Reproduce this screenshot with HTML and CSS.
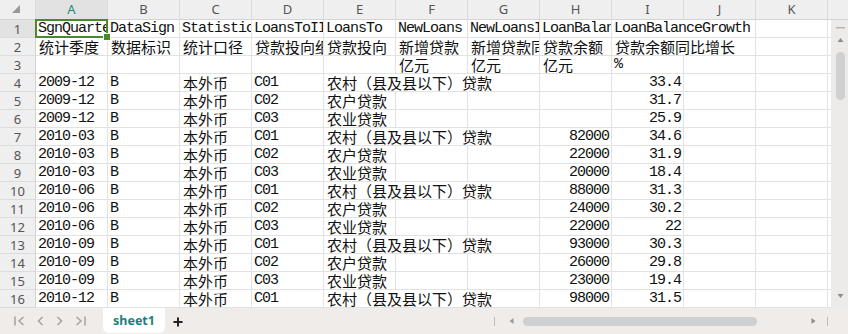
FILE: index.html
```html
<!DOCTYPE html>
<html lang="zh">
<head>
<meta charset="utf-8">
<link rel="stylesheet" href="styles.css">
</head>
<body>
<div class="app">
  <div class="top">
  <div class="sheet">
    <div class="hd corner"><svg width="8" height="8" viewBox="0 0 8 8"><path d="M8 0 L8 8 L0 8 Z" fill="#9a9a9a"/></svg></div>
    <div class="hd col sel">A</div>
    <div class="hd col">B</div>
    <div class="hd col">C</div>
    <div class="hd col">D</div>
    <div class="hd col">E</div>
    <div class="hd col">F</div>
    <div class="hd col">G</div>
    <div class="hd col">H</div>
    <div class="hd col">I</div>
    <div class="hd col">J</div>
    <div class="hd col">K</div>
    <div class="hd fill"></div>

    <div class="rh sel">1</div>
    <div class="c active"><span class="clip">SgnQuarter</span></div>
    <div class="c">DataSign</div>
    <div class="c">StatisticCaliber</div>
    <div class="c">LoansToIIType</div>
    <div class="c">LoansTo</div>
    <div class="c">NewLoans</div>
    <div class="c">NewLoansIncrease</div>
    <div class="c">LoanBalance</div>
    <div class="c s2">LoanBalanceGrowth</div>
    <div class="c"></div>
    <div class="c gap"></div>

    <div class="rh">2</div>
    <div class="c z">统计季度</div>
    <div class="c z">数据标识</div>
    <div class="c z">统计口径</div>
    <div class="c z">贷款投向细分</div>
    <div class="c z">贷款投向</div>
    <div class="c z">新增贷款</div>
    <div class="c z">新增贷款同比</div>
    <div class="c z">贷款余额</div>
    <div class="c z s2">贷款余额同比增长</div>
    <div class="c"></div>
    <div class="c gap"></div>

    <div class="rh">3</div>
    <div class="c"></div>
    <div class="c"></div>
    <div class="c"></div>
    <div class="c"></div>
    <div class="c"></div>
    <div class="c z">亿元</div>
    <div class="c z">亿元</div>
    <div class="c z">亿元</div>
    <div class="c">%</div>
    <div class="c"></div>
    <div class="c"></div>
    <div class="c gap"></div>

    <div class="rh">4</div>
    <div class="c">2009-12</div><div class="c">B</div><div class="c z">本外币</div><div class="c">C01</div>
    <div class="c z s3">农村（县及县以下）贷款</div>
    <div class="c r"></div><div class="c r">33.4</div><div class="c"></div><div class="c"></div><div class="c gap"></div>

    <div class="rh">5</div>
    <div class="c">2009-12</div><div class="c">B</div><div class="c z">本外币</div><div class="c">C02</div>
    <div class="c z">农户贷款</div><div class="c"></div><div class="c"></div>
    <div class="c r"></div><div class="c r">31.7</div><div class="c"></div><div class="c"></div><div class="c gap"></div>

    <div class="rh">6</div>
    <div class="c">2009-12</div><div class="c">B</div><div class="c z">本外币</div><div class="c">C03</div>
    <div class="c z">农业贷款</div><div class="c"></div><div class="c"></div>
    <div class="c r"></div><div class="c r">25.9</div><div class="c"></div><div class="c"></div><div class="c gap"></div>

    <div class="rh">7</div>
    <div class="c">2010-03</div><div class="c">B</div><div class="c z">本外币</div><div class="c">C01</div>
    <div class="c z s3">农村（县及县以下）贷款</div>
    <div class="c r">82000</div><div class="c r">34.6</div><div class="c"></div><div class="c"></div><div class="c gap"></div>

    <div class="rh">8</div>
    <div class="c">2010-03</div><div class="c">B</div><div class="c z">本外币</div><div class="c">C02</div>
    <div class="c z">农户贷款</div><div class="c"></div><div class="c"></div>
    <div class="c r">22000</div><div class="c r">31.9</div><div class="c"></div><div class="c"></div><div class="c gap"></div>

    <div class="rh">9</div>
    <div class="c">2010-03</div><div class="c">B</div><div class="c z">本外币</div><div class="c">C03</div>
    <div class="c z">农业贷款</div><div class="c"></div><div class="c"></div>
    <div class="c r">20000</div><div class="c r">18.4</div><div class="c"></div><div class="c"></div><div class="c gap"></div>

    <div class="rh">10</div>
    <div class="c">2010-06</div><div class="c">B</div><div class="c z">本外币</div><div class="c">C01</div>
    <div class="c z s3">农村（县及县以下）贷款</div>
    <div class="c r">88000</div><div class="c r">31.3</div><div class="c"></div><div class="c"></div><div class="c gap"></div>

    <div class="rh">11</div>
    <div class="c">2010-06</div><div class="c">B</div><div class="c z">本外币</div><div class="c">C02</div>
    <div class="c z">农户贷款</div><div class="c"></div><div class="c"></div>
    <div class="c r">24000</div><div class="c r">30.2</div><div class="c"></div><div class="c"></div><div class="c gap"></div>

    <div class="rh">12</div>
    <div class="c">2010-06</div><div class="c">B</div><div class="c z">本外币</div><div class="c">C03</div>
    <div class="c z">农业贷款</div><div class="c"></div><div class="c"></div>
    <div class="c r">22000</div><div class="c r">22</div><div class="c"></div><div class="c"></div><div class="c gap"></div>

    <div class="rh">13</div>
    <div class="c">2010-09</div><div class="c">B</div><div class="c z">本外币</div><div class="c">C01</div>
    <div class="c z s3">农村（县及县以下）贷款</div>
    <div class="c r">93000</div><div class="c r">30.3</div><div class="c"></div><div class="c"></div><div class="c gap"></div>

    <div class="rh">14</div>
    <div class="c">2010-09</div><div class="c">B</div><div class="c z">本外币</div><div class="c">C02</div>
    <div class="c z">农户贷款</div><div class="c"></div><div class="c"></div>
    <div class="c r">26000</div><div class="c r">29.8</div><div class="c"></div><div class="c"></div><div class="c gap"></div>

    <div class="rh">15</div>
    <div class="c">2010-09</div><div class="c">B</div><div class="c z">本外币</div><div class="c">C03</div>
    <div class="c z">农业贷款</div><div class="c"></div><div class="c"></div>
    <div class="c r">23000</div><div class="c r">19.4</div><div class="c"></div><div class="c"></div><div class="c gap"></div>

    <div class="rh">16</div>
    <div class="c">2010-12</div><div class="c">B</div><div class="c z">本外币</div><div class="c">C01</div>
    <div class="c z s3">农村（县及县以下）贷款</div>
    <div class="c r">98000</div><div class="c r">31.5</div><div class="c"></div><div class="c"></div><div class="c gap"></div>
  </div>

  <div class="rail">
    <div class="rail-head"></div>
    <div class="rail-track">
      <svg class="rail-svg" width="16" height="288" viewBox="0 0 16 288">
        <rect x="4" y="7" width="9" height="1.5" fill="#b5b5b5"/>
        <path d="M5.5 22 L8.5 18 L11.5 22 Z" fill="#8c8c8c"/>
        <rect x="4" y="32" width="9" height="48" rx="4.5" fill="#d0d0d0"/>
        <path d="M5.5 274 L8.5 278 L11.5 274 Z" fill="#8c8c8c"/>
      </svg>
    </div>
  </div>
  </div>

  <div class="tabbar">
    <div class="nav">
      <svg width="11" height="10" viewBox="0 0 11 10"><path d="M1 0.5 V9.5 M9.5 1 L5 5 L9.5 9" fill="none" stroke="#a3a3a3" stroke-width="1.5"/></svg>
      <svg width="7" height="10" viewBox="0 0 7 10"><path d="M5.5 1 L1.5 5 L5.5 9" fill="none" stroke="#a3a3a3" stroke-width="1.5"/></svg>
      <svg width="7" height="10" viewBox="0 0 7 10"><path d="M1.5 1 L5.5 5 L1.5 9" fill="none" stroke="#a3a3a3" stroke-width="1.5"/></svg>
      <svg width="11" height="10" viewBox="0 0 11 10"><path d="M1.5 1 L6 5 L1.5 9 M10 0.5 V9.5" fill="none" stroke="#a3a3a3" stroke-width="1.5"/></svg>
    </div>
    <div class="tab">sheet1</div>
    <svg class="plus" width="10" height="10" viewBox="0 0 10 10"><path d="M5 0.5 V9.5 M0.5 5 H9.5" stroke="#222" stroke-width="2"/></svg>
    <div class="spacer"></div>
    <div class="hbar">
      <span class="hb-sep"></span>
      <svg class="hb-arrow" width="5" height="6" viewBox="0 0 5 6"><path d="M4.5 0 L0.5 3 L4.5 6 Z" fill="#9a9a9a"/></svg>
      <span class="hb-knob"></span>
      <svg class="hb-arrow-r" width="5" height="6" viewBox="0 0 5 6"><path d="M0.5 0 L4.5 3 L0.5 6 Z" fill="#8a8a8a"/></svg>
      <span class="hb-sep2"></span>
    </div>
  </div>
</div>
</body>
</html>
```
FILE: styles.css
```css
* { box-sizing: border-box; }
html, body {
  margin: 0;
  padding: 0;
  background: #ffffff;
  overflow: hidden;
}
.app {
  width: 848px;
  height: 334px;
  display: flex;
  flex-direction: column;
  overflow: hidden;
}
.top {
  display: flex;
  flex-direction: row;
  width: 848px;
  height: 308px;
  flex: none;
  background:
    linear-gradient(#d0d0d0, #d0d0d0) 836px 53px / 9px 46px no-repeat,
    linear-gradient(#d0d0d0, #d0d0d0) 837px 52px / 7px 48px no-repeat,
    linear-gradient(#b5b5b5, #b5b5b5) 836px 27px / 9px 2px no-repeat,
    linear-gradient(#efefef, #efefef) 831px 0 / 17px 19px no-repeat,
    linear-gradient(#d4d4d4, #d4d4d4) 831px 19px / 17px 1px no-repeat,
    linear-gradient(#ecebea, #ecebea) 831px 20px / 17px 288px no-repeat,
    #ffffff;
}
.sheet {
  display: grid;
  grid-template-columns: 36px repeat(11, 72px) 3px;
  grid-template-rows: 20px repeat(16, 18px);
  width: 831px;
  height: 308px;
  flex: none;
  background: #ffffff;
}
.rail {
  position: relative;
  z-index: 1;
  width: 17px;
  height: 308px;
  flex: none;
  display: flex;
  flex-direction: column;
}
.rail-head {
  height: 20px;
  flex: none;
  background: #efefef;
  border-bottom: 1px solid #d4d4d4;
}
.rail-track {
  height: 288px;
  flex: none;
  background: #ecebea;
  padding-left: 1px;
}
.rail-svg { display: block; }
.hd {
  background: #efefef;
  border-right: 1px solid #dcdcdc;
  border-bottom: 1px solid #d4d4d4;
  font-family: "Noto Sans", "Liberation Sans", sans-serif;
  font-size: 13px;
  color: #555555;
  display: flex;
  align-items: center;
  justify-content: center;
  line-height: 1;
}
.hd.corner { justify-content: flex-end; align-items: flex-end; padding: 0 15px 6px 0; }
.hd.col.sel { background: #e2e2e2; color: #1e8a7c; }
.hd.fill { border-right: none; }
.rh {
  background: #efefef;
  border-right: 1px solid #d4d4d4;
  border-bottom: 1px solid #dcdcdc;
  font-family: "Noto Sans", "Liberation Sans", sans-serif;
  font-size: 13px;
  color: #555555;
  display: flex;
  align-items: center;
  justify-content: center;
  padding-top: 1px;
}
.rh.sel { background: #e2e2e2; }
.c {
  border-right: 1px solid #e2e2e2;
  border-bottom: 1px solid #e2e2e2;
  font-family: "Liberation Mono", "Noto Sans CJK SC", monospace;
  font-size: 15px;
  letter-spacing: -1px;
  line-height: 18px;
  color: #111111;
  padding: 0 3px 0 2px;
  white-space: nowrap;
  overflow: hidden;
  min-width: 0;
}
.c.z {
  font-family: "Noto Sans CJK SC", "Noto Sans CJK JP", sans-serif;
  font-size: 15px;
  letter-spacing: 0;
  line-height: 17px;
  padding-left: 3px;
}
.c.r { text-align: right; padding-right: 2px; }
.c.s2 { grid-column: span 2; }
.c.s3 { grid-column: span 3; }
.c.gap { border-right: none; }
.c.active { position: relative; overflow: visible; padding: 0; }
.c.active .clip { display: block; overflow: hidden; padding-left: 2px; height: 17px; }
.c.active::after {
  content: "";
  position: absolute;
  left: -1px;
  top: -1px;
  right: -1px;
  bottom: -1px;
  border: 2px solid #4a8a2c;
}
.c.active::before {
  content: "";
  position: absolute;
  right: -4px;
  bottom: -4px;
  width: 6px;
  height: 6px;
  background: #4a8a2c;
  border: 1px solid #ffffff;
  z-index: 2;
}
.tabbar {
  height: 26px;
  flex: none;
  background: #efecea;
  display: flex;
  align-items: flex-start;
}
.nav {
  width: 103px;
  height: 26px;
  display: flex;
  align-items: center;
  padding-left: 14px;
  gap: 12px;
}
.tab {
  width: 62px;
  height: 25px;
  background: #ffffff;
  border-radius: 0 0 6px 6px;
  font-family: "Noto Sans", "Liberation Sans", sans-serif;
  font-weight: 700;
  font-size: 12.5px;
  color: #1b7f7b;
  display: flex;
  align-items: center;
  justify-content: center;
  padding-bottom: 1px;
}
.plus { margin: 9px 0 0 8px; }
.spacer { flex: 1; }
.hbar {
  width: 354px;
  height: 26px;
  display: flex;
  align-items: center;
}
.hb-sep { width: 1px; height: 9px; background: #bdbdbd; }
.hb-arrow { margin-left: 14px; }
.hb-knob { width: 234px; height: 9px; border-radius: 5px; background: #d0d0d0; margin-left: 9px; }
.hb-arrow-r { margin-left: 54px; }
.hb-sep2 { width: 1px; height: 9px; background: #bdbdbd; margin-left: 11px; }
```
